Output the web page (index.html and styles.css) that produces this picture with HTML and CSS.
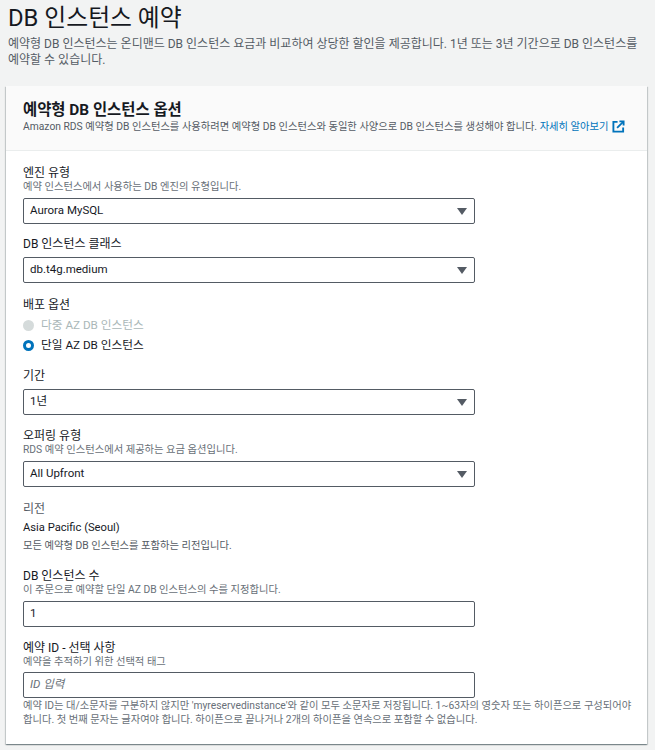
FILE: index.html
```html
<!DOCTYPE html>
<html lang="ko">
<head>
    <meta charset="UTF-8">
    <meta name="viewport" content="width=device-width, initial-scale=1.0">
    <title>DB 인스턴스 예약</title>
    <link rel="stylesheet" href="styles.css">
</head>
<body>

<div class="page-header">
    <h1>DB 인스턴스 예약</h1>
    <p>예약형 DB 인스턴스는 온디맨드 DB 인스턴스 요금과 비교하여 상당한 할인을 제공합니다. 1년 또는 3년 기간으로 DB 인스턴스를 예약할 수 있습니다.</p>
</div>

<div class="card">
    <div class="card-header">
        <h2>예약형 DB 인스턴스 옵션</h2>
        <p>Amazon RDS 예약형 DB 인스턴스를 사용하려면 예약형 DB 인스턴스와 동일한 사양으로 DB 인스턴스를 생성해야 합니다. <a href="#">자세히 알아보기
            <svg class="ext-icon" width="13" height="13" viewBox="0 0 14 14" fill="none" stroke="#0073bb" stroke-width="2"><path d="M6 2H1.500V12.500H12V8"/><path d="M5.500 8.500L12 2"/><path d="M8 1.500H12.500V6"/></svg>
        </a></p>
    </div>

    <div class="card-body">
        <div class="field field-engine">
            <label>엔진 유형</label>
            <div class="hint">예약 인스턴스에서 사용하는 DB 엔진의 유형입니다.</div>
            <div class="select">Aurora MySQL<span class="caret"></span></div>
        </div>

        <div class="field field-class">
            <label>DB 인스턴스 클래스</label>
            <div class="select">db.t4g.medium<span class="caret"></span></div>
        </div>

        <div class="field field-deploy">
            <label>배포 옵션</label>
            <div class="radio disabled"><span class="dot"></span>다중 AZ DB 인스턴스</div>
            <div class="radio checked"><span class="dot"></span>단일 AZ DB 인스턴스</div>
        </div>

        <div class="field field-term">
            <label>기간</label>
            <div class="select">1년<span class="caret"></span></div>
        </div>

        <div class="field field-offering">
            <label>오퍼링 유형</label>
            <div class="hint">RDS 예약 인스턴스에서 제공하는 요금 옵션입니다.</div>
            <div class="select">All Upfront<span class="caret"></span></div>
        </div>

        <div class="field field-region">
            <label class="muted">리전</label>
            <div class="value">Asia Pacific (Seoul)</div>
            <div class="hint dark">모든 예약형 DB 인스턴스를 포함하는 리전입니다.</div>
        </div>

        <div class="field field-count">
            <label>DB 인스턴스 수</label>
            <div class="hint">이 주문으로 예약할 단일 AZ DB 인스턴스의 수를 지정합니다.</div>
            <div class="input">1</div>
        </div>

        <div class="field field-id">
            <label>예약 ID - 선택 사항</label>
            <div class="hint">예약을 추적하기 위한 선택적 태그</div>
            <div class="input placeholder">ID 입력</div>
            <div class="hint note">예약 ID는 대/소문자를 구분하지 않지만 'myreservedinstance'와 같이 모두 소문자로 저장됩니다. 1~63자의 영숫자 또는 하이픈으로 구성되어야 합니다. 첫 번째 문자는 글자여야 합니다. 하이픈으로 끝나거나 2개의 하이픈을 연속으로 포함할 수 없습니다.</div>
        </div>
    </div>
</div>

</body>
</html>
```

FILE: styles.css
```css
body {
    font-family: Roboto, "Noto Sans CJK KR", sans-serif;
    background-color: #f2f3f3;
    color: #16191f;
    margin: 0;
    padding: 0 8px 7px 6px;
    font-size: 12px;
    line-height: 16px;
}

.page-header {
    padding: 0 2px;
    height: 86px;
}

.page-header h1 {
    font-size: 23.8px;
    line-height: 36px;
    font-weight: 400;
    margin: 0;
}

.page-header p {
    font-size: 12px;
    line-height: 16px;
    color: #545b64;
    margin: 0;
}

.card {
    background-color: #fff;
    box-shadow: 0 1px 1px 0 rgba(0,28,36,0.3), 1px 1px 1px 0 rgba(0,28,36,0.15), -1px 1px 1px 0 rgba(0,28,36,0.15);
}

.card-header {
    background-color: #fafafa;
    border-bottom: 1px solid #eaeded;
    padding: 14px 17px 0;
    height: 50px;
}

.card-header h2 {
    font-size: 15.4px;
    line-height: 20px;
    font-weight: 700;
    margin: 0;
}

.card-header p {
    font-size: 10.3px;
    line-height: 16px;
    color: #545b64;
    margin: -1px 0 0;
    white-space: nowrap;
}

.card-header a {
    color: #0073bb;
    text-decoration: none;
}

.ext-icon {
    vertical-align: -3px;
    margin-left: 1px;
}

.card-body {
    padding: 14px 17px 17px;
}

.field label {
    display: block;
    font-size: 12px;
    line-height: 16px;
    margin-bottom: -2px;
}

.field label.muted {
    color: #545b64;
}

.hint {
    font-size: 10.3px;
    line-height: 14px;
    margin-top: 1px;
    color: #687078;
}

.hint.dark {
    color: #545b64;
    margin-top: 3px;
}

.hint.note {
    margin-top: 1px;
    width: 612px;
}

.select, .input {
    width: 452px;
    height: 26px;
    box-sizing: border-box;
    background-color: #fff;
    border: 1px solid #545b64;
    border-radius: 2px;
    padding: 0 6px;
    font-size: 11.5px;
    line-height: 23px;
    position: relative;
    margin-top: 4px;
}

label + .select {
    margin-top: 7px;
}

.caret {
    position: absolute;
    right: 7px;
    top: 9px;
    border-left: 5px solid transparent;
    border-right: 5px solid transparent;
    border-top: 7px solid #545b64;
}

.placeholder {
    font-style: italic;
    color: #687078;
}

.value {
    font-size: 11.2px;
    margin-top: 5px;
}

.radio {
    display: flex;
    align-items: center;
    gap: 7px;
    font-size: 11.7px;
    height: 20px;
}

.radio .dot {
    width: 11px;
    height: 11px;
    border-radius: 50%;
    box-sizing: border-box;
}

.radio.disabled {
    color: #aab7b8;
    margin-top: 4px;
}

.radio.disabled .dot {
    background-color: #d5dbdb;
}

.radio.checked .dot {
    border: 3.5px solid #0073bb;
    background-color: #fff;
}

.field-class { margin-top: 12px; }
.field-deploy { margin-top: 14px; }
.field-term { margin-top: 13px; }
.field-offering { margin-top: 13px; }
.field-region { margin-top: 14px; }
.field-count { margin-top: 15px; }
.field-id { margin-top: 13px; }
.field-id .input { margin-top: 3px; }
```
